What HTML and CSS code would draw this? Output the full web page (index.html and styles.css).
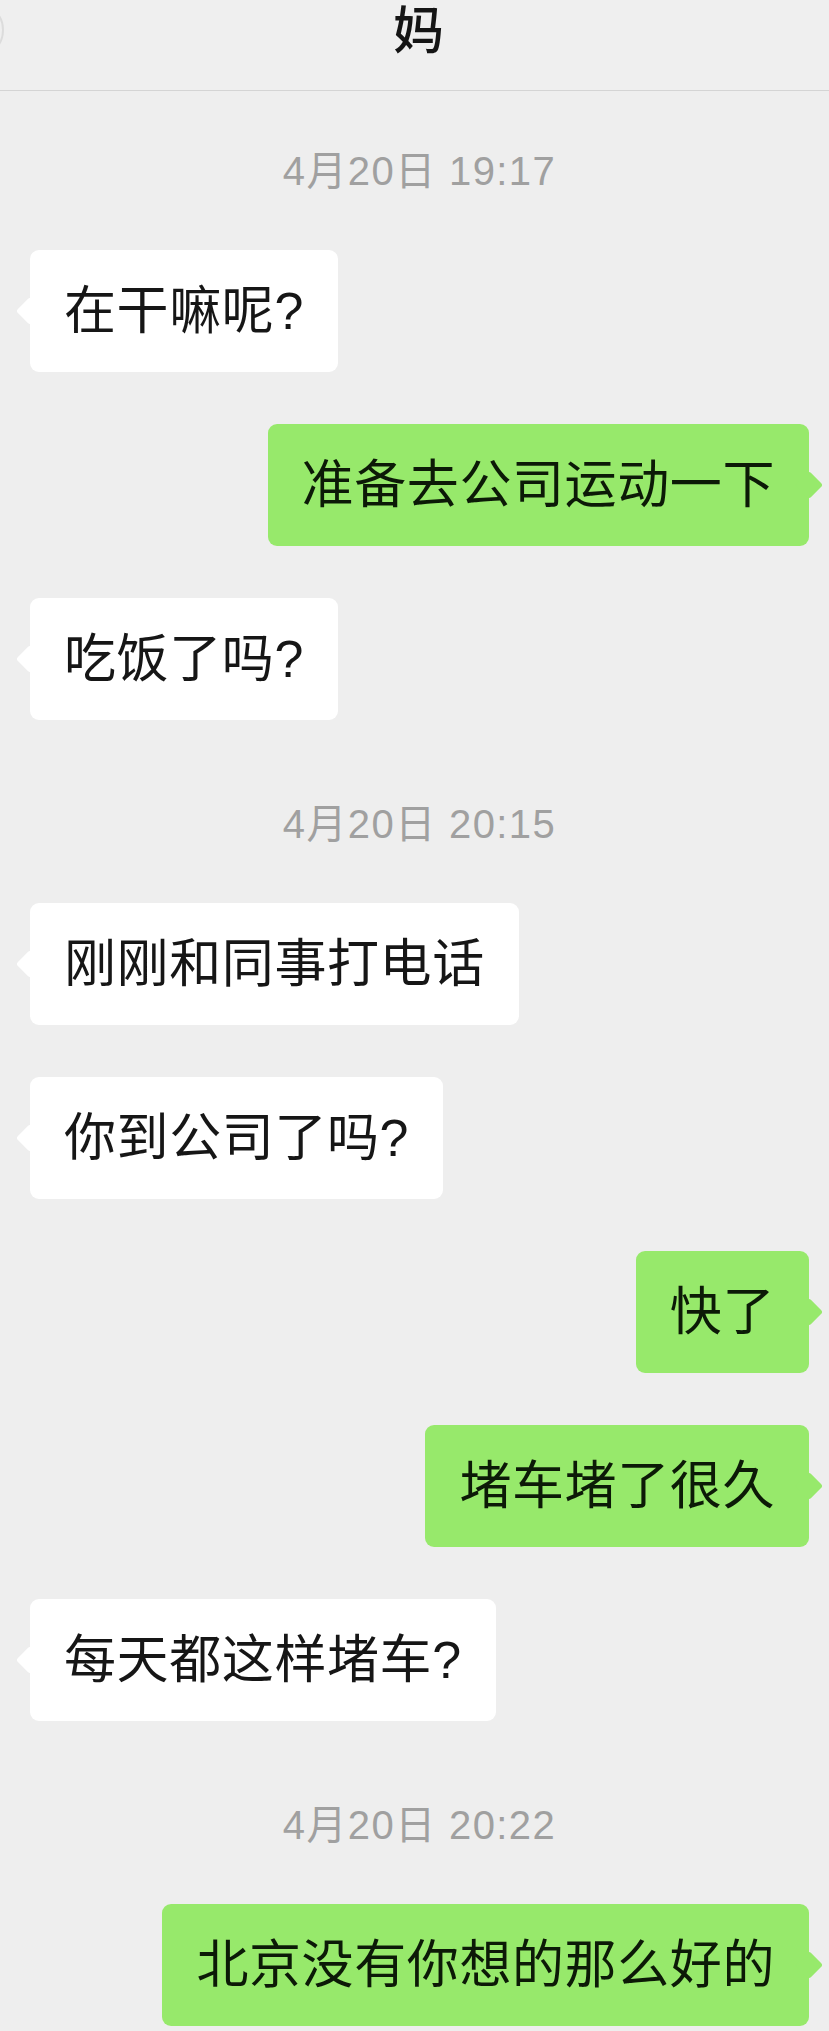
FILE: index.html
```html
<!DOCTYPE html>
<html lang="zh-CN">
<head>
<meta charset="utf-8">
<title>妈</title>
<link rel="stylesheet" href="styles.css">
</head>
<body>
<div class="page">
  <header class="topbar">
    <span class="back-edge"></span>
    <h1 class="title">妈</h1>
  </header>
  <main class="chat">
    <div class="time">4月20日 19:17</div>
    <div class="row left"><div class="bubble white">在干嘛呢?</div></div>
    <div class="row right"><div class="bubble green">准备去公司运动一下</div></div>
    <div class="row left"><div class="bubble white">吃饭了吗?</div></div>
    <div class="time">4月20日 20:15</div>
    <div class="row left"><div class="bubble white">刚刚和同事打电话</div></div>
    <div class="row left"><div class="bubble white">你到公司了吗?</div></div>
    <div class="row right"><div class="bubble green">快了</div></div>
    <div class="row right"><div class="bubble green">堵车堵了很久</div></div>
    <div class="row left"><div class="bubble white">每天都这样堵车?</div></div>
    <div class="time">4月20日 20:22</div>
    <div class="row right"><div class="bubble green">北京没有你想的那么好的</div></div>
  </main>
</div>
</body>
</html>
```

FILE: styles.css
```css
html, body {
  margin: 0;
  padding: 0;
  background: #eeeeee;
}

body {
  font-family: "Liberation Sans", "Noto Sans CJK SC", sans-serif;
  color: #111111;
}

.page {
  width: 829px;
  height: 2031px;
  overflow: hidden;
  background: #eeeeee;
}

.topbar {
  position: relative;
  height: 90px;
  border-bottom: 1px solid #d4d4d4;
  display: flex;
  justify-content: center;
  align-items: flex-start;
  background: #efefef;
}

.back-edge {
  position: absolute;
  left: -22px;
  top: 10px;
  width: 26px;
  height: 40px;
  border-radius: 50%;
  border: 2px solid #dcdcdc;
  box-sizing: border-box;
}

.title {
  margin: 0;
  font-size: 51px;
  line-height: 54px;
  font-weight: 500;
  font-family: "Noto Sans CJK SC", sans-serif;
  color: #151515;
  padding-left: 8px;
}

.chat {
  display: flex;
  flex-direction: column;
  padding: 0 20px 0 30px;
}

.time {
  margin-top: 78px;
  height: 52px;
  line-height: 52px;
  text-align: center;
  font-size: 40px;
  letter-spacing: 1.4px;
  color: #a0a0a0;
}

.chat > .time:first-child {
  margin-top: 54px;
}

.row {
  display: flex;
  margin-top: 52px;
}

.time + .row {
  margin-top: 53px;
}

.row.left {
  justify-content: flex-start;
}

.row.right {
  justify-content: flex-end;
}

.bubble {
  position: relative;
  font-size: 52px;
  line-height: 72px;
  letter-spacing: 0.6px;
  padding: 25px 34px;
  border-radius: 9px;
  white-space: nowrap;
}

.bubble::before {
  content: "";
  position: absolute;
  top: 50%;
  width: 20px;
  height: 20px;
  margin-top: -10px;
  transform: rotate(45deg);
  border-radius: 3px;
}

.bubble.white {
  background: #ffffff;
  color: #161616;
}

.bubble.white::before {
  left: -10px;
  background: #ffffff;
}

.bubble.green {
  background: #97e96b;
  color: #0c1a07;
}

.bubble.green::before {
  right: -10px;
  background: #97e96b;
}
```
